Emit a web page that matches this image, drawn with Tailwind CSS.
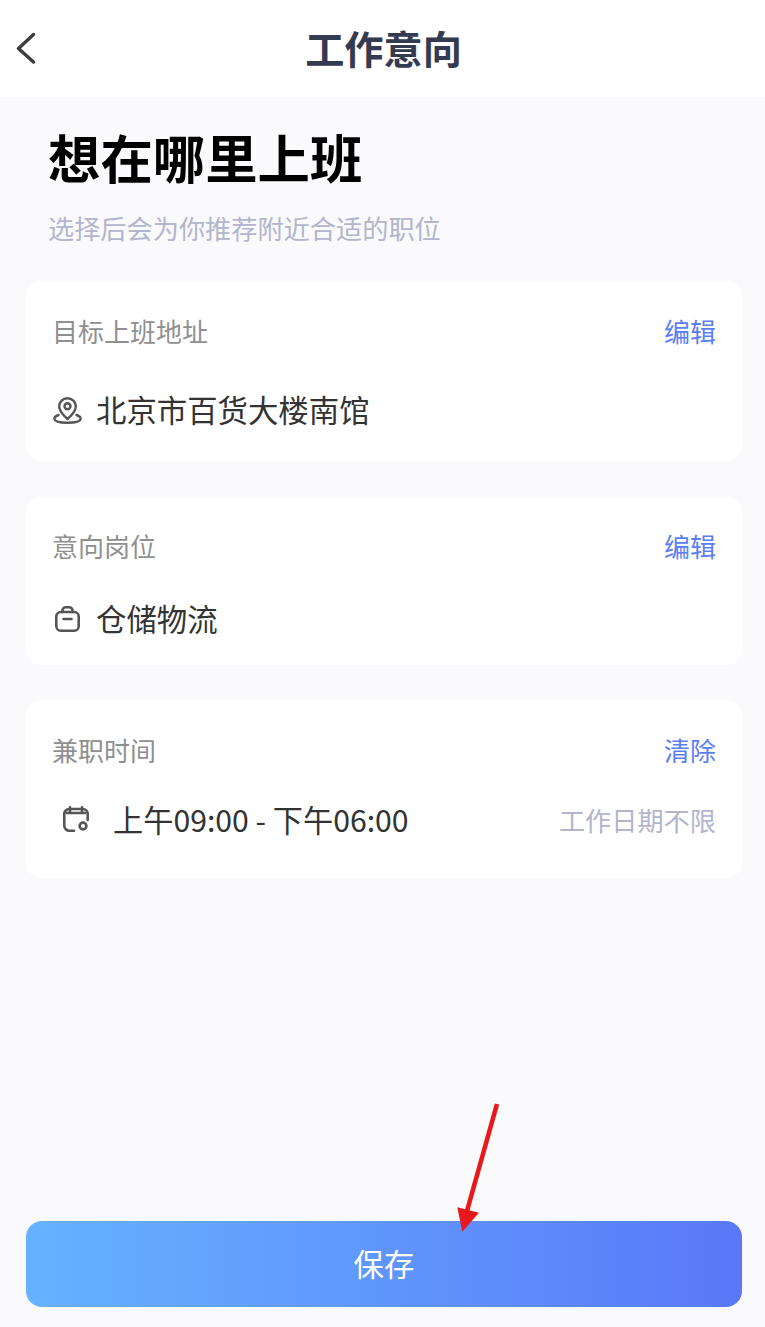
<!DOCTYPE html>
<html lang="zh-CN">
<head>
  <meta charset="UTF-8" />
  <meta name="viewport" content="width=device-width, initial-scale=1.0" />
  <title>工作意向</title>
  <script src="https://cdn.jsdelivr.net/npm/@tailwindcss/browser@4"></script>
</head>
<body class="bg-[#fafafc] font-['Noto_Sans_CJK_SC','Noto_Sans',sans-serif]">
  <div class="relative h-[1327px] w-[765px] overflow-hidden flex flex-col">
    <header class="h-[97px] shrink-0 bg-white flex items-center justify-center relative">
      <svg class="absolute left-[15px] top-[32px]" width="22" height="32" viewBox="0 0 22 32" fill="none" stroke="#3d3d3d" stroke-width="3.4" stroke-linecap="round" stroke-linejoin="round"><path d="M18.5 2.5 L3.5 16.5 L18.5 30"/></svg>
      <h1 class="text-[39.2px] leading-none font-bold text-[#343a50] mb-[2px] ml-[2px]">工作意向</h1>
    </header>

    <main class="flex-1 flex flex-col pl-[26px] pr-[23px]">
      <h2 class="pl-[22px] pt-[29px] text-[52.4px] leading-[60px] font-bold text-black">想在哪里上班</h2>
      <p class="pl-[22px] mt-[22px] text-[26.2px] leading-[40px] text-[#b2b5cc]">选择后会为你推荐附近合适的职位</p>

      <section class="mt-[33px] h-[180px] bg-white rounded-[16px] px-[26px] pt-[30px]">
        <div class="flex justify-between items-center h-[38px]">
          <span class="text-[26px] text-[#8f8f8f]">目标上班地址</span>
          <a class="text-[26px] text-[#5b7ef5]">编辑</a>
        </div>
        <div class="flex items-center mt-[42px] h-[38px]">
          <svg class="mr-[14px]" width="30" height="30" viewBox="0 0 30 30" fill="none" stroke="#555555" stroke-width="2.4" stroke-linecap="round" stroke-linejoin="round">
            <path d="M15.5 24 C11 20 7.2 16 7.2 11.5 A8.3 8.3 0 0 1 23.8 11.5 C23.8 16 20 20 15.5 24 Z"/>
            <circle cx="15.5" cy="11.3" r="3"/>
            <path d="M6.5 20 C3.5 21 2.2 22.4 2.4 24 C2.8 26.6 8 27.8 15.5 27.8 C23 27.8 28.2 26.6 28.6 24 C28.8 22.4 27.5 21 24.5 20"/>
          </svg>
          <span class="text-[30.4px] text-[#333333]">北京市百货大楼南馆</span>
        </div>
      </section>

      <section class="mt-[36px] h-[168px] bg-white rounded-[16px] px-[26px] pt-[29px]">
        <div class="flex justify-between items-center h-[38px]">
          <span class="text-[26px] text-[#8f8f8f]">意向岗位</span>
          <a class="text-[26px] text-[#5b7ef5]">编辑</a>
        </div>
        <div class="flex items-center mt-[36px] h-[38px]">
          <svg class="mr-[14px]" width="30" height="30" viewBox="0 0 30 30" fill="none" stroke="#555555" stroke-width="2.6" stroke-linecap="round" stroke-linejoin="round">
            <rect x="4.3" y="8" width="22.4" height="18.7" rx="4.5"/>
            <path d="M10.5 8 V6.5 A3.2 3.2 0 0 1 13.7 3.3 H17.3 A3.2 3.2 0 0 1 20.5 6.5 V8"/>
            <path d="M11.5 15 H19.5"/>
          </svg>
          <span class="text-[30.4px] text-[#333333]">仓储物流</span>
        </div>
      </section>

      <section class="mt-[35px] h-[178px] bg-white rounded-[16px] px-[26px] pt-[30px]">
        <div class="flex justify-between items-center h-[38px]">
          <span class="text-[26px] text-[#8f8f8f]">兼职时间</span>
          <a class="text-[26px] text-[#5b7ef5]">清除</a>
        </div>
        <div class="flex items-center mt-[33px] h-[38px]">
          <svg class="ml-[11px] mr-[22px]" width="28" height="30" viewBox="0 -1 28 30" fill="none" stroke="#555555" stroke-width="2.6" stroke-linecap="round" stroke-linejoin="round">
            <path d="M11 24.7 H6.3 A5 5 0 0 1 1.3 19.7 V8 A5 5 0 0 1 6.3 3 H19.7 A5 5 0 0 1 24.7 8 V14"/>
            <path d="M7 1.3 V6.5 M19 1.3 V6.5"/>
            <path d="M4 7 H22"/>
            <circle cx="20" cy="20" r="3.4"/>
          </svg>
          <span class="text-[30.2px] text-[#333333]">上午09:00 - 下午06:00</span>
          <span class="ml-auto mt-[2px] text-[26.2px] text-[#b2b5cc]">工作日期不限</span>
        </div>
      </section>

      <button class="mt-auto mb-[20px] h-[86px] w-full rounded-[16px] bg-linear-to-r from-[#66b2ff] to-[#5a78f8] text-white text-[30.4px]">保存</button>
    </main>

    <!-- red callout arrow over the save button -->
    <svg class="absolute left-[450px] top-[1098px]" width="56" height="138" viewBox="0 0 56 138" fill="none">
      <path d="M47 6 L17 113" stroke="#e8191c" stroke-width="4.6"/>
      <polygon points="12.3,133.7 7.3,109.3 29,114.7" fill="#e8191c"/>
    </svg>
  </div>
</body>
</html>
